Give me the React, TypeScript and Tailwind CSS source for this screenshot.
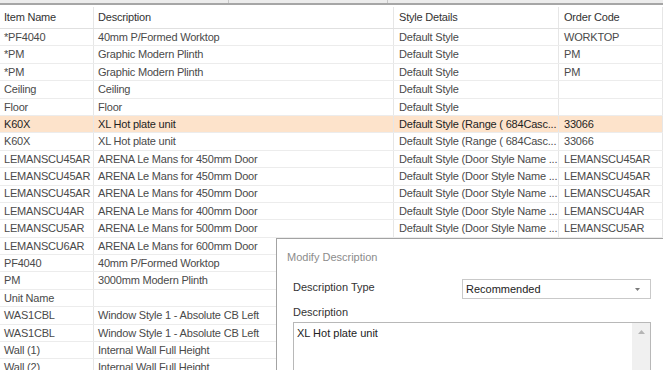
import React from "react";

type Row = {
  item: string;
  desc: string;
  style: string;
  code: string;
  selected?: boolean;
};

const DOOR = "Default Style (Door Style Name ...";
const RANGE = "Default Style (Range ( 684Casc...";

const rows: Row[] = [
  { item: "*PF4040", desc: "40mm P/Formed Worktop", style: "Default Style", code: "WORKTOP" },
  { item: "*PM", desc: "Graphic Modern Plinth", style: "Default Style", code: "PM" },
  { item: "*PM", desc: "Graphic Modern Plinth", style: "Default Style", code: "PM" },
  { item: "Ceiling", desc: "Ceiling", style: "Default Style", code: "" },
  { item: "Floor", desc: "Floor", style: "Default Style", code: "" },
  { item: "K60X", desc: "XL Hot plate unit", style: RANGE, code: "33066", selected: true },
  { item: "K60X", desc: "XL Hot plate unit", style: RANGE, code: "33066" },
  { item: "LEMANSCU45AR", desc: "ARENA Le Mans for 450mm Door", style: DOOR, code: "LEMANSCU45AR" },
  { item: "LEMANSCU45AR", desc: "ARENA Le Mans for 450mm Door", style: DOOR, code: "LEMANSCU45AR" },
  { item: "LEMANSCU45AR", desc: "ARENA Le Mans for 450mm Door", style: DOOR, code: "LEMANSCU45AR" },
  { item: "LEMANSCU4AR", desc: "ARENA Le Mans for 400mm Door", style: DOOR, code: "LEMANSCU4AR" },
  { item: "LEMANSCU5AR", desc: "ARENA Le Mans for 500mm Door", style: DOOR, code: "LEMANSCU5AR" },
  { item: "LEMANSCU6AR", desc: "ARENA Le Mans for 600mm Door", style: DOOR, code: "LEMANSCU6AR" },
  { item: "PF4040", desc: "40mm P/Formed Worktop", style: "Default Style", code: "" },
  { item: "PM", desc: "3000mm Modern Plinth", style: "Default Style", code: "" },
  { item: "Unit Name", desc: "", style: "", code: "" },
  { item: "WAS1CBL", desc: "Window Style 1 - Absolute CB Left", style: "", code: "" },
  { item: "WAS1CBL", desc: "Window Style 1 - Absolute CB Left", style: "", code: "" },
  { item: "Wall (1)", desc: "Internal Wall Full Height", style: "", code: "" },
  { item: "Wall (2)", desc: "Internal Wall Full Height", style: "", code: "" },
];

const cols = "grid grid-cols-[94px_300px_165px_1fr]";

function Cell({ children, pad = "pl-[4px]" }: { children?: React.ReactNode; pad?: string }) {
  return (
    <div className={`${pad} flex items-center border-r border-[#e6e6e6] whitespace-nowrap overflow-hidden`}>
      {children}
    </div>
  );
}

function ModifyDialog() {
  return (
    <div className="absolute left-[276px] top-[238px] w-[400px] h-[150px] bg-white border border-[#a3a3a3] text-[11px] tracking-normal">
      {/* Title */}
      <div className="h-[37px] flex items-center pl-[10px] text-[#8c8c8c]">Modify Description</div>

      <div className="pl-[16px] w-[375px] flex flex-col">
        {/* Description Type */}
        <div className="mt-[3px] flex">
          <div className="w-[169px] leading-[16px] text-[#333]">Description Type</div>
          <div className="w-[189px] h-[20px] border border-[#c9c9c9] flex items-center justify-between pl-[3px] pr-[10px] text-[#222]">
            <span>Recommended</span>
            <svg width="5" height="3" viewBox="0 0 5 3">
              <path d="M0 0h5L2.5 3z" fill="#7a7a7a" />
            </svg>
          </div>
        </div>

        {/* Description */}
        <div className="mt-[5px] leading-[16px] text-[#333]">Description</div>
        <div className="mt-[2px] w-[358px] h-[70px] border border-[#b8b8b8] flex">
          <div className="flex-1 pl-[3px] pt-[3px] leading-[14px] text-[#222]">XL Hot plate unit</div>
          <div className="w-[18px] bg-[#f0f0f0] flex justify-center pt-[7px]">
            <svg width="7" height="4" viewBox="0 0 7 4">
              <path d="M3.5 0L7 4H0z" fill="#b5b5b5" />
            </svg>
          </div>
        </div>
      </div>
    </div>
  );
}

export default function App() {
  return (
    <div
      className="relative w-[663px] h-[370px] overflow-hidden bg-white text-[11px] tracking-[-0.2px]"
      style={{ fontFamily: '"Liberation Sans", Arial, sans-serif' }}
    >
      {/* top strip */}
      <div className="h-[3px] bg-[#ececec] flex">
        <div className="w-[229px] border-r border-[#c8c8c8]" />
        <div className="w-[159px] border-r border-[#c8c8c8]" />
      </div>
      <div className="h-[2px] bg-[#a6a6a6]" />

      {/* Header */}
      <div className={`${cols} h-[24px] pt-[2px] border-b border-[#e0e0e0] text-[#333]`}>
        <Cell>Item Name</Cell>
        <Cell>Description</Cell>
        <Cell pad="pl-[5px]">Style Details</Cell>
        <Cell pad="pl-[5px]">Order Code</Cell>
      </div>

      {/* Rows */}
      {rows.map((r, i) => (
        <div
          key={i}
          className={`${cols} h-[17.4px] border-b border-[#ececec] ${
            r.selected ? "bg-[#fde3cb] text-[#1e1e1e]" : "text-[#4a4a4a]"
          }`}
        >
          <Cell>{r.item}</Cell>
          <Cell>{r.desc}</Cell>
          <Cell pad="pl-[5px]">{r.style}</Cell>
          <Cell pad="pl-[5px]">{r.code}</Cell>
        </div>
      ))}

      <ModifyDialog />
    </div>
  );
}
